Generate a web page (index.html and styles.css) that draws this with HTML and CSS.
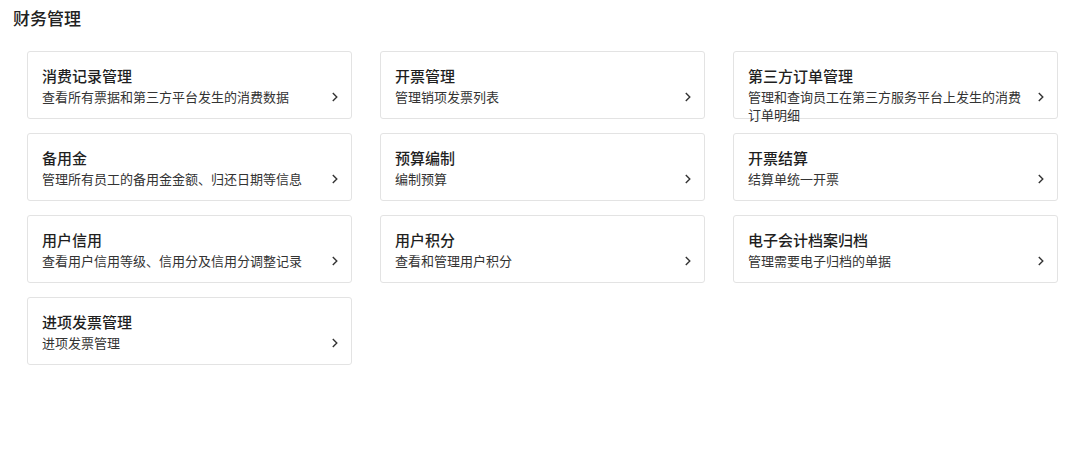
FILE: index.html
```html
<!DOCTYPE html>
<html lang="zh-CN">
<head>
    <meta charset="UTF-8">
    <meta name="viewport" content="width=device-width, initial-scale=1.0">
    <title>财务管理</title>
    <link rel="stylesheet" href="styles.css">
</head>
<body>
    <h1 class="page-title">财务管理</h1>

    <div class="menu-grid">
        <div class="menu-card">
            <div class="menu-title">消费记录管理</div>
            <div class="menu-row">
                <div class="menu-desc">查看所有票据和第三方平台发生的消费数据</div>
                <svg class="chevron" viewBox="0 0 10 10"><path d="M3.8 1 L7.8 5 L3.8 9"/></svg>
            </div>
        </div>
        <div class="menu-card">
            <div class="menu-title">开票管理</div>
            <div class="menu-row">
                <div class="menu-desc">管理销项发票列表</div>
                <svg class="chevron" viewBox="0 0 10 10"><path d="M3.8 1 L7.8 5 L3.8 9"/></svg>
            </div>
        </div>
        <div class="menu-card">
            <div class="menu-title">第三方订单管理</div>
            <div class="menu-row">
                <div class="menu-desc">管理和查询员工在第三方服务平台上发生的消费订单明细</div>
                <svg class="chevron" viewBox="0 0 10 10"><path d="M3.8 1 L7.8 5 L3.8 9"/></svg>
            </div>
        </div>

        <div class="menu-card">
            <div class="menu-title">备用金</div>
            <div class="menu-row">
                <div class="menu-desc">管理所有员工的备用金金额、归还日期等信息</div>
                <svg class="chevron" viewBox="0 0 10 10"><path d="M3.8 1 L7.8 5 L3.8 9"/></svg>
            </div>
        </div>
        <div class="menu-card">
            <div class="menu-title">预算编制</div>
            <div class="menu-row">
                <div class="menu-desc">编制预算</div>
                <svg class="chevron" viewBox="0 0 10 10"><path d="M3.8 1 L7.8 5 L3.8 9"/></svg>
            </div>
        </div>
        <div class="menu-card">
            <div class="menu-title">开票结算</div>
            <div class="menu-row">
                <div class="menu-desc">结算单统一开票</div>
                <svg class="chevron" viewBox="0 0 10 10"><path d="M3.8 1 L7.8 5 L3.8 9"/></svg>
            </div>
        </div>

        <div class="menu-card">
            <div class="menu-title">用户信用</div>
            <div class="menu-row">
                <div class="menu-desc">查看用户信用等级、信用分及信用分调整记录</div>
                <svg class="chevron" viewBox="0 0 10 10"><path d="M3.8 1 L7.8 5 L3.8 9"/></svg>
            </div>
        </div>
        <div class="menu-card">
            <div class="menu-title">用户积分</div>
            <div class="menu-row">
                <div class="menu-desc">查看和管理用户积分</div>
                <svg class="chevron" viewBox="0 0 10 10"><path d="M3.8 1 L7.8 5 L3.8 9"/></svg>
            </div>
        </div>
        <div class="menu-card">
            <div class="menu-title">电子会计档案归档</div>
            <div class="menu-row">
                <div class="menu-desc">管理需要电子归档的单据</div>
                <svg class="chevron" viewBox="0 0 10 10"><path d="M3.8 1 L7.8 5 L3.8 9"/></svg>
            </div>
        </div>

        <div class="menu-card">
            <div class="menu-title">进项发票管理</div>
            <div class="menu-row">
                <div class="menu-desc">进项发票管理</div>
                <svg class="chevron" viewBox="0 0 10 10"><path d="M3.8 1 L7.8 5 L3.8 9"/></svg>
            </div>
        </div>
    </div>
</body>
</html>
```

FILE: styles.css
```css
body {
    margin: 0;
    font-family: "Noto Sans CJK SC", "Noto Sans", sans-serif;
    color: #333;
    background-color: #fff;
}
.page-title {
    margin: 0;
    padding: 6px 13px 0;
    font-size: 17px;
    line-height: 24px;
    font-weight: 500;
    color: #222;
}
.menu-grid {
    display: grid;
    grid-template-columns: repeat(3, 325px);
    gap: 14px 28px;
    margin: 21px 0 0 27px;
}
.menu-card {
    box-sizing: border-box;
    height: 68px;
    padding: 14px 12px 0 14px;
    border: 1px solid #e3e3e3;
    border-radius: 3px;
    background-color: #fff;
}
.menu-title {
    font-size: 15px;
    line-height: 20px;
    font-weight: 500;
    color: #1f1f1f;
}
.menu-row {
    display: flex;
    align-items: flex-start;
    gap: 12px;
    margin-top: 2px;
}
.menu-desc {
    flex: 1;
    font-size: 13px;
    line-height: 18px;
    color: #333;
}
.chevron {
    flex: none;
    width: 10px;
    height: 10px;
    margin-top: 4px;
    fill: none;
    stroke: #333;
    stroke-width: 1.4;
}
```
